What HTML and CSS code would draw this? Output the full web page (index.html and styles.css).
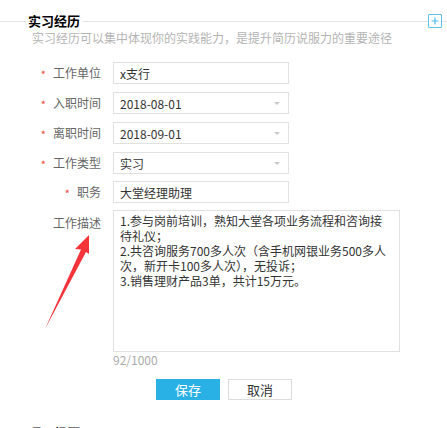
FILE: index.html
```html
<!DOCTYPE html>
<html lang="zh-CN">
<head>
<meta charset="utf-8">
<link rel="stylesheet" href="styles.css">
</head>
<body>
<div class="page">
  <div class="head">
    <span class="line-l"></span>
    <h2 class="title">实习经历</h2>
    <span class="line"></span>
    <span class="plus"><svg width="8" height="8" viewBox="0 0 8 8"><path d="M4 0.5V7.5M0.5 4H7.5" stroke="#4dbaea" stroke-width="1.2"/></svg></span>
    <span class="line-r"></span>
  </div>
  <p class="sub">实习经历可以集中体现你的实践能力，是提升简历说服力的重要途径</p>

  <div class="form">
    <div class="row">
      <label class="lbl"><span class="star">*</span>工作单位</label>
      <div class="field">x支行</div>
    </div>
    <div class="row">
      <label class="lbl"><span class="star">*</span>入职时间</label>
      <div class="field select">2018-08-01<span class="caret"></span></div>
    </div>
    <div class="row">
      <label class="lbl"><span class="star">*</span>离职时间</label>
      <div class="field select">2018-09-01<span class="caret"></span></div>
    </div>
    <div class="row">
      <label class="lbl"><span class="star">*</span>工作类型</label>
      <div class="field select">实习<span class="caret"></span></div>
    </div>
    <div class="row tight">
      <label class="lbl"><span class="star">*</span>职务</label>
      <div class="field">大堂经理助理</div>
    </div>
    <div class="row top tight">
      <label class="lbl lbl-top">工作描述</label>
      <div class="area">1.参与岗前培训，熟知大堂各项业务流程和咨询接<br>待礼仪；<br>2.共咨询服务700多人次（含手机网银业务500多人<br>次，新开卡100多人次），无投诉；<br>3.销售理财产品3单，共计15万元。</div>
    </div>
    <div class="count">92/1000</div>
    <div class="btns">
      <button class="btn save">保存</button>
      <button class="btn cancel">取消</button>
    </div>
  </div>

  <div class="head next">
    <span class="line-l"></span>
    <h2 class="title">项目经历</h2>
    <span class="line"></span>
  </div>

  <svg class="arrow" width="447" height="428" viewBox="0 0 447 428">
    <polygon points="89,235 75,249 81,249.5 45,329 86,252 89,254" fill="#f5333a"/>
  </svg>
</div>
</body>
</html>
```

FILE: styles.css
```css
* { box-sizing: border-box; }
html, body { margin: 0; padding: 0; background: #fff; }
body {
  font-family: "Noto Sans CJK SC", "Microsoft YaHei", sans-serif;
  font-size: 12px;
  color: #333;
}
.page {
  position: relative;
  width: 447px;
  height: 428px;
  overflow: hidden;
  padding-top: 14px;
}
.head {
  display: flex;
  align-items: center;
  height: 14px;
}
.line-l { width: 26px; height: 1px; background: #e3e3e3; }
.line { flex: 1; height: 1px; background: #e3e3e3; }
.line-r { width: 5px; height: 1px; background: #e3e3e3; }
.title {
  margin: 0;
  padding: 0 3px 0 2px;
  font-size: 13px;
  line-height: 14px;
  font-weight: bold;
  color: #000;
}
.plus {
  width: 14px;
  height: 14px;
  border: 1px solid #5bc2ee;
  border-radius: 1px;
  display: flex;
  align-items: center;
  justify-content: center;
}
.sub {
  margin: 2px 0 0;
  padding-left: 32px;
  font-size: 12px;
  line-height: 16px;
  color: #b4b4b4;
}
.form {
  margin-top: 16px;
  display: flex;
  flex-direction: column;
  gap: 8px;
}
.row {
  display: grid;
  grid-template-columns: 101px 176px;
  column-gap: 12px;
  align-items: center;
}
.row.top { grid-template-columns: 101px 287px; align-items: start; }
.row.tight { margin-top: -1px; }
.lbl {
  text-align: right;
  color: #666;
  font-size: 12px;
  line-height: 14px;
}
.lbl-top { padding-top: 6px; }
.star {
  color: #ef4a3c;
  font-size: 11px;
  margin-right: 7px;
  position: relative;
  top: 1px;
}
.field {
  height: 22px;
  border: 1px solid #e1e1e1;
  padding: 0 8px 0 6px;
  display: flex;
  align-items: center;
  justify-content: space-between;
  color: #333;
  font-size: 12px;
}
.caret {
  width: 0;
  height: 0;
  border-left: 3px solid transparent;
  border-right: 3px solid transparent;
  border-top: 3px solid #c9c9c9;
}
.area {
  height: 142px;
  border: 1px solid #e1e1e1;
  padding: 2px 6px;
  font-size: 12px;
  line-height: 15px;
  color: #333;
  white-space: nowrap;
}
.count {
  margin: -7px 0 0 113px;
  color: #ababab;
  font-size: 12px;
  line-height: 14px;
}
.btns {
  display: flex;
  gap: 8px;
  padding-left: 156px;
  margin-top: 4px;
}
.btn {
  width: 64px;
  height: 21px;
  padding: 0;
  font-family: inherit;
  font-size: 13px;
  line-height: 19px;
  border: 1px solid #ddd;
  background: #fff;
  color: #333;
  cursor: pointer;
}
.btn.save {
  background: #29b1e6;
  border-color: #29b1e6;
  color: #fff;
}
.head.next { margin-top: 26px; }
.arrow {
  position: absolute;
  left: 0;
  top: 0;
  pointer-events: none;
}
```
